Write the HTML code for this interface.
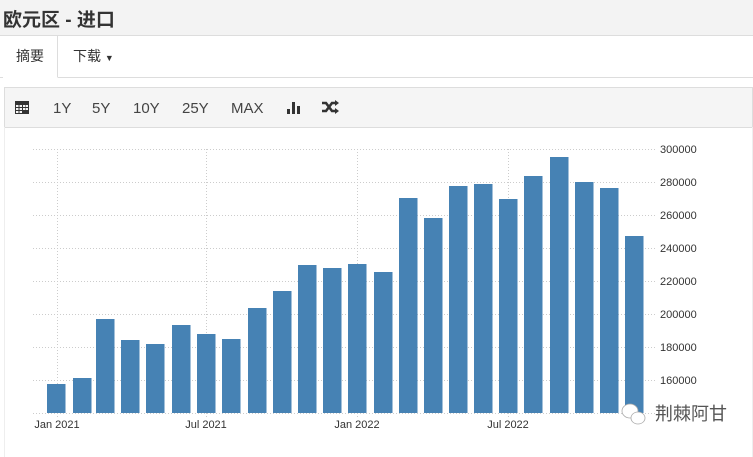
<!DOCTYPE html>
<html><head><meta charset="utf-8"><style>
body{margin:0;width:753px;height:446px;overflow:hidden;background:#fff;font-family:"Liberation Sans","Noto Sans CJK SC",sans-serif;position:relative}
.title{position:absolute;left:0;top:0;width:753px;height:35px;background:#f3f3f3;border-bottom:1px solid #ddd}
.title span{position:absolute;left:3px;top:5px;font-size:19px;font-weight:bold;color:#333}
.tabs{position:absolute;left:0;top:36px;width:753px;height:41px;border-bottom:1px solid #ddd}
.tab1{position:absolute;left:3px;top:0;width:54px;height:41px;border-right:1px solid #ddd;background:#fff;font-size:14px;color:#333;line-height:40px;text-align:center;border-bottom:1px solid #fff}
.tab2{position:absolute;left:73px;top:0;font-size:14px;color:#333;line-height:40px}
.tb{position:absolute;left:4px;top:87px;width:747px;height:39px;background:#f5f5f5;border:1px solid #ddd}
.tb span{position:absolute;top:12px;font-size:15px;color:#444}
.chartbox{position:absolute;left:4px;top:127px;width:747px;height:330px;border-left:1px solid #eee;border-right:1px solid #eee}
</style></head><body>
<div class="title"><span>欧元区 - 进口</span></div>
<div class="tabs"><div class="tab1">摘要</div><div class="tab2">下载 <span style="font-size:9px">▼</span></div></div>
<div class="tb">
<svg style="position:absolute;left:10px;top:12px" width="14" height="14"><rect x="0" y="1" width="14" height="13" fill="#333"/><g fill="#f5f5f5"><rect x="1" y="5" width="2.5" height="2"/><rect x="4.5" y="5" width="2.5" height="2"/><rect x="8" y="5" width="2.5" height="2"/><rect x="1" y="8" width="2.5" height="2"/><rect x="4.5" y="8" width="2.5" height="2"/><rect x="8" y="8" width="2.5" height="2"/><rect x="11" y="8" width="2" height="2"/><rect x="1" y="11" width="2.5" height="2"/><rect x="4.5" y="11" width="2.5" height="2"/><rect x="11" y="5" width="2" height="2"/></g></svg>
<span style="left:48px">1Y</span><span style="left:87px">5Y</span><span style="left:128px">10Y</span><span style="left:177px">25Y</span><span style="left:226px">MAX</span>
<svg style="position:absolute;left:282px;top:13px" width="14" height="14"><rect x="0" y="8" width="3" height="5" fill="#333"/><rect x="5" y="1" width="3" height="12" fill="#333"/><rect x="10" y="5" width="3" height="8" fill="#333"/></svg>
<svg style="position:absolute;left:316px;top:12px" width="18" height="14"><path d="M1 3h4l6 8h4M1 11h4l6-8h4" stroke="#333" stroke-width="2.6" fill="none"/><path d="M14 0l4 3-4 3zM14 8l4 3-4 3z" fill="#333"/></svg>
</div>
<div class="chartbox"></div>
<svg style="position:absolute;left:0;top:0" width="753" height="446">
<g stroke="#ccc" stroke-dasharray="1,2" stroke-width="1">
<line x1="33" y1="149.5" x2="655" y2="149.5"/><line x1="33" y1="182.5" x2="655" y2="182.5"/><line x1="33" y1="215.5" x2="655" y2="215.5"/><line x1="33" y1="248.5" x2="655" y2="248.5"/><line x1="33" y1="281.5" x2="655" y2="281.5"/><line x1="33" y1="314.5" x2="655" y2="314.5"/><line x1="33" y1="347.5" x2="655" y2="347.5"/><line x1="33" y1="380.5" x2="655" y2="380.5"/><line x1="33" y1="413.5" x2="655" y2="413.5"/>
<line x1="57.5" y1="149" x2="57.5" y2="418"/><line x1="206.5" y1="149" x2="206.5" y2="418"/><line x1="357.5" y1="149" x2="357.5" y2="418"/><line x1="508.5" y1="149" x2="508.5" y2="418"/>
</g>
<g fill="#4682b4">
<rect x="47" y="384" width="18.5" height="29"/><rect x="73" y="378" width="18.5" height="35"/><rect x="96" y="319" width="18.5" height="94"/><rect x="121" y="340" width="18.5" height="73"/><rect x="146" y="344" width="18.5" height="69"/><rect x="172" y="325" width="18.5" height="88"/><rect x="197" y="334" width="18.5" height="79"/><rect x="222" y="339" width="18.5" height="74"/><rect x="248" y="308" width="18.5" height="105"/><rect x="273" y="291" width="18.5" height="122"/><rect x="298" y="265" width="18.5" height="148"/><rect x="323" y="268" width="18.5" height="145"/><rect x="348" y="264" width="18.5" height="149"/><rect x="374" y="272" width="18.5" height="141"/><rect x="399" y="198" width="18.5" height="215"/><rect x="424" y="218" width="18.5" height="195"/><rect x="449" y="186" width="18.5" height="227"/><rect x="474" y="184" width="18.5" height="229"/><rect x="499" y="199" width="18.5" height="214"/><rect x="524" y="176" width="18.5" height="237"/><rect x="550" y="157" width="18.5" height="256"/><rect x="575" y="182" width="18.5" height="231"/><rect x="600" y="188" width="18.5" height="225"/><rect x="625" y="236" width="18.5" height="177"/>
</g>
<g font-family="Liberation Sans, sans-serif" font-size="11" fill="#333">
<text x="660" y="153">300000</text><text x="660" y="186">280000</text><text x="660" y="219">260000</text><text x="660" y="252">240000</text><text x="660" y="285">220000</text><text x="660" y="318">200000</text><text x="660" y="351">180000</text><text x="660" y="384">160000</text>
<text x="57" y="428" text-anchor="middle">Jan 2021</text><text x="206" y="428" text-anchor="middle">Jul 2021</text><text x="357" y="428" text-anchor="middle">Jan 2022</text><text x="508" y="428" text-anchor="middle">Jul 2022</text>
</g>
<g fill="#fff" stroke="#aaa" stroke-width="0.8"><ellipse cx="630" cy="411" rx="8" ry="7"/><ellipse cx="638" cy="418" rx="7" ry="6"/></g>
<text x="655" y="420" font-family="Noto Sans CJK SC, sans-serif" font-size="18" fill="#555">荆棘阿甘</text>
</svg>
</body></html>
